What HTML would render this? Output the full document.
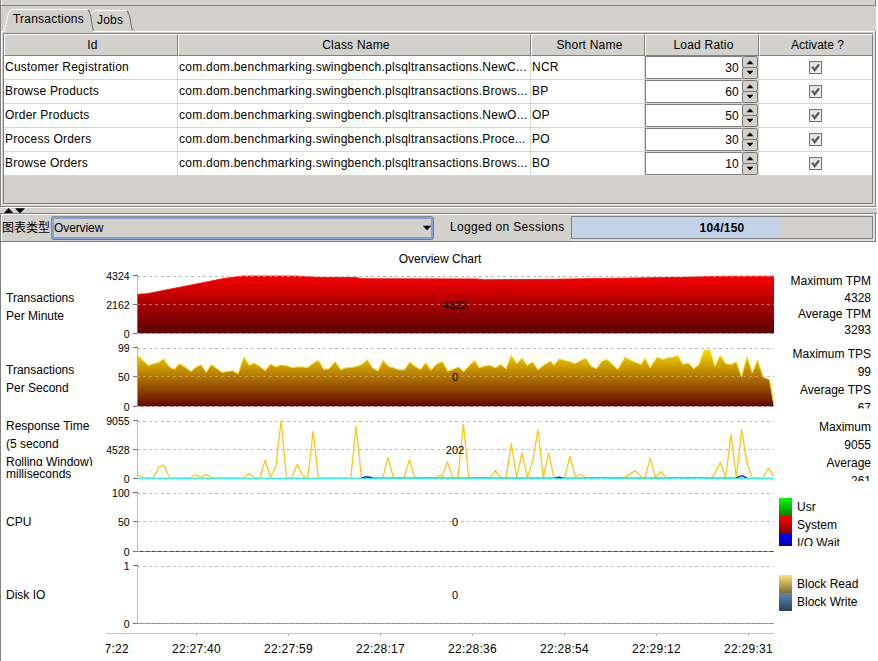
<!DOCTYPE html>
<html><head><meta charset="utf-8">
<style>
html,body{margin:0;padding:0;}
body{width:878px;height:661px;overflow:hidden;background:#d3d1cb;position:relative;font-family:"Liberation Sans","Noto Sans CJK SC",sans-serif;font-size:12px;color:#000;letter-spacing:0.22px;}
.abs{position:absolute;}
.t{position:absolute;white-space:nowrap;line-height:14px;}
.hd{position:absolute;top:34px;height:22px;background:#d3d1cb;border-left:1px solid #fff;border-top:1px solid #fff;border-right:1px solid #808080;border-bottom:1px solid #808080;box-sizing:border-box;text-align:center;line-height:20px;padding-left:3px;}
.row{position:absolute;left:4px;width:868px;height:23px;background:#fff;border-bottom:1px solid #d8d5cd;}
.cell{position:absolute;top:0;height:23px;line-height:22px;white-space:nowrap;overflow:hidden;}
.vl{position:absolute;top:56px;height:120px;width:1px;background:#d8d5cd;}
.spin{position:absolute;left:641px;top:0;width:98px;height:23px;border:1px solid #808080;box-sizing:border-box;background:#fff;}
.sb{position:absolute;left:738px;top:0;background:#d3d1cb;}
.cb{position:absolute;left:805px;top:5px;}
</style></head><body>
<!-- outer frame -->
<div class="abs" style="left:876px;top:0;width:2px;height:661px;background:#fff"></div>
<div class="abs" style="left:0;top:5px;width:876px;height:1px;background:#808080"></div>
<div class="abs" style="left:875px;top:0;width:1px;height:6px;background:#808080"></div>
<div class="abs" style="left:0;top:0;width:1px;height:661px;background:#808080"></div>
<div class="abs" style="left:1px;top:0;width:1px;height:5px;background:#fff"></div>
<!-- tabbed pane content border -->
<div class="abs" style="left:1px;top:31px;width:1px;height:175px;background:#fff"></div>
<div class="abs" style="left:1px;top:31px;width:3px;height:1px;background:#fff"></div>
<div class="abs" style="left:93px;top:31px;width:782px;height:1px;background:#fff"></div>
<div class="abs" style="left:875px;top:31px;width:1px;height:176px;background:#808080"></div>

<!-- tabs -->
<svg class="abs" style="left:0;top:8px" width="140" height="26">
<path d="M4.5 23 L5.5 17 L7.5 9 Q9 2.5 11.5 1.5 L87 1.5" fill="none" stroke="#fff" stroke-width="1"/>
<path d="M88 1.8 Q90 4 90.8 8 Q92 18 93.5 22.5" fill="none" stroke="#707070" stroke-width="1.1"/>
<path d="M91.3 6 Q92.5 3 94.5 2.5 L126.5 2.5" fill="none" stroke="#fff" stroke-width="1"/>
<path d="M127 2.8 Q129 5 129.8 9 Q131 18 132.5 22.5" fill="none" stroke="#707070" stroke-width="1.1"/>
</svg>
<div class="t" style="left:13px;top:12px;">Transactions</div>
<div class="t" style="left:97px;top:13px;">Jobs</div>

<!-- table -->
<div class="abs" style="left:3px;top:33px;width:872px;height:173px;background:#e2dfd9;"></div>
<div class="abs" style="left:3px;top:33px;width:870px;height:171px;border:1px solid #808080;box-sizing:border-box;background:#d3d1cb"></div>
<div class="hd" style="left:4px;width:174px;">Id</div>
<div class="hd" style="left:178px;width:353px;">Class Name</div>
<div class="hd" style="left:531px;width:114px;">Short Name</div>
<div class="hd" style="left:645px;width:114px;">Load Ratio</div>
<div class="hd" style="left:759px;width:114px;letter-spacing:0.05px">Activate ?</div>
<div class="row" style="top:56px"><div class="cell" style="left:1px">Customer Registration</div><div class="cell" style="left:175px;letter-spacing:0.25px">com.dom.benchmarking.swingbench.plsqltransactions.NewC...</div><div class="cell" style="left:528px">NCR</div><div class="spin"><div class="cell" style="right:3px;top:0">30</div></div><svg class="sb" width="16" height="23" viewBox="0 0 16 23"><rect x="0.5" y="0.5" width="15" height="11" rx="2" fill="#d3d1cb" stroke="#727272"/><rect x="0.5" y="11.5" width="15" height="11" rx="2" fill="#d3d1cb" stroke="#727272"/><path d="M4.5 8.3 L8 4.6 L11.5 8.3 Z M4.5 14.7 L11.5 14.7 L8 18.4 Z" fill="#000"/></svg><svg class="cb" width="13" height="13" viewBox="0 0 13 13"><defs><linearGradient id="cbg0" x1="0" y1="0" x2="1" y2="1"><stop offset="0" stop-color="#dededa"/><stop offset="1" stop-color="#f2f2f0"/></linearGradient></defs><rect x="0.5" y="0.5" width="12" height="12" fill="url(#cbg0)" stroke="#707070"/><path d="M3.3 5.8 L5.8 9 L10 3.4" fill="none" stroke="#5a5a5a" stroke-width="2.3"/></svg></div>
<div class="row" style="top:80px"><div class="cell" style="left:1px">Browse Products</div><div class="cell" style="left:175px;letter-spacing:0.25px">com.dom.benchmarking.swingbench.plsqltransactions.Brows...</div><div class="cell" style="left:528px">BP</div><div class="spin"><div class="cell" style="right:3px;top:0">60</div></div><svg class="sb" width="16" height="23" viewBox="0 0 16 23"><rect x="0.5" y="0.5" width="15" height="11" rx="2" fill="#d3d1cb" stroke="#727272"/><rect x="0.5" y="11.5" width="15" height="11" rx="2" fill="#d3d1cb" stroke="#727272"/><path d="M4.5 8.3 L8 4.6 L11.5 8.3 Z M4.5 14.7 L11.5 14.7 L8 18.4 Z" fill="#000"/></svg><svg class="cb" width="13" height="13" viewBox="0 0 13 13"><defs><linearGradient id="cbg1" x1="0" y1="0" x2="1" y2="1"><stop offset="0" stop-color="#dededa"/><stop offset="1" stop-color="#f2f2f0"/></linearGradient></defs><rect x="0.5" y="0.5" width="12" height="12" fill="url(#cbg1)" stroke="#707070"/><path d="M3.3 5.8 L5.8 9 L10 3.4" fill="none" stroke="#5a5a5a" stroke-width="2.3"/></svg></div>
<div class="row" style="top:104px"><div class="cell" style="left:1px">Order Products</div><div class="cell" style="left:175px;letter-spacing:0.25px">com.dom.benchmarking.swingbench.plsqltransactions.NewO...</div><div class="cell" style="left:528px">OP</div><div class="spin"><div class="cell" style="right:3px;top:0">50</div></div><svg class="sb" width="16" height="23" viewBox="0 0 16 23"><rect x="0.5" y="0.5" width="15" height="11" rx="2" fill="#d3d1cb" stroke="#727272"/><rect x="0.5" y="11.5" width="15" height="11" rx="2" fill="#d3d1cb" stroke="#727272"/><path d="M4.5 8.3 L8 4.6 L11.5 8.3 Z M4.5 14.7 L11.5 14.7 L8 18.4 Z" fill="#000"/></svg><svg class="cb" width="13" height="13" viewBox="0 0 13 13"><defs><linearGradient id="cbg2" x1="0" y1="0" x2="1" y2="1"><stop offset="0" stop-color="#dededa"/><stop offset="1" stop-color="#f2f2f0"/></linearGradient></defs><rect x="0.5" y="0.5" width="12" height="12" fill="url(#cbg2)" stroke="#707070"/><path d="M3.3 5.8 L5.8 9 L10 3.4" fill="none" stroke="#5a5a5a" stroke-width="2.3"/></svg></div>
<div class="row" style="top:128px"><div class="cell" style="left:1px">Process Orders</div><div class="cell" style="left:175px;letter-spacing:0.25px">com.dom.benchmarking.swingbench.plsqltransactions.Proce...</div><div class="cell" style="left:528px">PO</div><div class="spin"><div class="cell" style="right:3px;top:0">30</div></div><svg class="sb" width="16" height="23" viewBox="0 0 16 23"><rect x="0.5" y="0.5" width="15" height="11" rx="2" fill="#d3d1cb" stroke="#727272"/><rect x="0.5" y="11.5" width="15" height="11" rx="2" fill="#d3d1cb" stroke="#727272"/><path d="M4.5 8.3 L8 4.6 L11.5 8.3 Z M4.5 14.7 L11.5 14.7 L8 18.4 Z" fill="#000"/></svg><svg class="cb" width="13" height="13" viewBox="0 0 13 13"><defs><linearGradient id="cbg3" x1="0" y1="0" x2="1" y2="1"><stop offset="0" stop-color="#dededa"/><stop offset="1" stop-color="#f2f2f0"/></linearGradient></defs><rect x="0.5" y="0.5" width="12" height="12" fill="url(#cbg3)" stroke="#707070"/><path d="M3.3 5.8 L5.8 9 L10 3.4" fill="none" stroke="#5a5a5a" stroke-width="2.3"/></svg></div>
<div class="row" style="top:152px"><div class="cell" style="left:1px">Browse Orders</div><div class="cell" style="left:175px;letter-spacing:0.25px">com.dom.benchmarking.swingbench.plsqltransactions.Brows...</div><div class="cell" style="left:528px">BO</div><div class="spin"><div class="cell" style="right:3px;top:0">10</div></div><svg class="sb" width="16" height="23" viewBox="0 0 16 23"><rect x="0.5" y="0.5" width="15" height="11" rx="2" fill="#d3d1cb" stroke="#727272"/><rect x="0.5" y="11.5" width="15" height="11" rx="2" fill="#d3d1cb" stroke="#727272"/><path d="M4.5 8.3 L8 4.6 L11.5 8.3 Z M4.5 14.7 L11.5 14.7 L8 18.4 Z" fill="#000"/></svg><svg class="cb" width="13" height="13" viewBox="0 0 13 13"><defs><linearGradient id="cbg4" x1="0" y1="0" x2="1" y2="1"><stop offset="0" stop-color="#dededa"/><stop offset="1" stop-color="#f2f2f0"/></linearGradient></defs><rect x="0.5" y="0.5" width="12" height="12" fill="url(#cbg4)" stroke="#707070"/><path d="M3.3 5.8 L5.8 9 L10 3.4" fill="none" stroke="#5a5a5a" stroke-width="2.3"/></svg></div>
<div class="vl" style="left:177px"></div><div class="vl" style="left:530px"></div><div class="vl" style="left:644px"></div><div class="vl" style="left:758px"></div>

<!-- splitter -->
<div class="abs" style="left:0;top:206px;width:876px;height:1px;background:#808080"></div>
<div class="abs" style="left:0;top:207px;width:877px;height:7px;background:#d3d1cb"></div>
<div class="abs" style="left:0;top:207px;width:876px;height:1px;background:#fff"></div>
<svg class="abs" style="left:0;top:207px" width="30" height="7"><path d="M3.5 6.5 L8.5 1 L13.5 6.5 Z M15 1.2 L25 1.2 L20 6.5 Z" fill="#000"/></svg>
<div class="abs" style="left:0;top:213px;width:877px;height:1px;background:#808080"></div>
<!-- lower panel -->
<div class="abs" style="left:1px;top:214px;width:874px;height:1px;background:#fff"></div>
<div class="abs" style="left:1px;top:214px;width:1px;height:27px;background:#fff"></div>
<div class="abs" style="left:875px;top:214px;width:1px;height:28px;background:#808080"></div>
<div class="t" style="left:2px;top:221px;font-size:12px;letter-spacing:0;">图表类型</div>
<div class="abs" style="left:51px;top:216px;width:383px;height:24px;box-sizing:border-box;border:1px solid #8c8c8c;border-right-color:#7c7c7c;border-bottom-color:#7c7c7c;border-radius:3px;box-shadow:inset 0 0 0 2px #7fa0d8;"></div>
<div class="t" style="left:54px;top:221px;letter-spacing:-0.1px">Overview</div>
<svg class="abs" style="left:422px;top:225px" width="12" height="7"><path d="M0.8 0.8 L9.2 0.8 L5 5.2 Z" fill="#000"/></svg>
<div class="t" style="left:450px;top:220px;letter-spacing:0.32px">Logged on Sessions</div>
<div class="abs" style="left:571px;top:216px;width:304px;height:25px;background:#e2dfd9;"></div>
<div class="abs" style="left:571px;top:216px;width:302px;height:23px;box-sizing:border-box;border:1px solid #808080;background:#d3d1cb"><div style="width:208px;height:21px;background:#c2d3ea"></div></div>
<div class="t" style="left:571px;top:221px;width:302px;text-align:center;font-weight:bold;">104/150</div>
<!-- chart area -->
<div class="abs" style="left:0;top:241px;width:876px;height:1px;background:#808080"></div>
<div class="abs" style="left:1px;top:242px;width:877px;height:419px;background:#fff"></div>
<svg class="abs" style="left:0;top:241px" width="878" height="420" viewBox="0 0 878 420" font-family="Liberation Sans, sans-serif" letter-spacing="0">
<defs>
<linearGradient id="gr" gradientUnits="userSpaceOnUse" x1="0" y1="35" x2="0" y2="92"><stop offset="0" stop-color="#f80000"/><stop offset="1" stop-color="#5c0000"/></linearGradient>
<linearGradient id="gy" gradientUnits="userSpaceOnUse" x1="0" y1="107" x2="0" y2="165"><stop offset="0" stop-color="#ffe400"/><stop offset="1" stop-color="#640600"/></linearGradient>
<linearGradient id="lg1" x1="0" y1="0" x2="0" y2="1"><stop offset="0" stop-color="#00ff00"/><stop offset="1" stop-color="#008000"/></linearGradient>
<linearGradient id="lg2" x1="0" y1="0" x2="0" y2="1"><stop offset="0" stop-color="#ff0000"/><stop offset="1" stop-color="#800000"/></linearGradient>
<linearGradient id="lg3" x1="0" y1="0" x2="0" y2="1"><stop offset="0" stop-color="#0000ff"/><stop offset="1" stop-color="#000080"/></linearGradient>
<linearGradient id="lg4" x1="0" y1="0" x2="0" y2="1"><stop offset="0" stop-color="#ffe27a"/><stop offset="1" stop-color="#806e32"/></linearGradient>
<linearGradient id="lg5" x1="0" y1="0" x2="0" y2="1"><stop offset="0" stop-color="#5a86b8"/><stop offset="1" stop-color="#2c425c"/></linearGradient>
<clipPath id="c1"><rect x="770" y="0" width="108" height="305"/></clipPath>
<clipPath id="c2"><rect x="770" y="0" width="108" height="167.5"/></clipPath>
<clipPath id="c3"><rect x="770" y="0" width="108" height="240.0"/></clipPath>
<clipPath id="c4"><rect x="105.5" y="380" width="700" height="40"/></clipPath>
</defs>
<line x1="137" y1="35.5" x2="774" y2="35.5" stroke="#bcbcbc" stroke-dasharray="3,3"/>
<line x1="137" y1="63.5" x2="774" y2="63.5" stroke="#bcbcbc" stroke-dasharray="3,3"/>
<line x1="137" y1="92.5" x2="774" y2="92.5" stroke="#bcbcbc" stroke-dasharray="3,3"/>
<line x1="137" y1="107.5" x2="774" y2="107.5" stroke="#bcbcbc" stroke-dasharray="3,3"/>
<line x1="137" y1="135.5" x2="774" y2="135.5" stroke="#bcbcbc" stroke-dasharray="3,3"/>
<line x1="137" y1="165.5" x2="774" y2="165.5" stroke="#bcbcbc" stroke-dasharray="3,3"/>
<line x1="137" y1="180.5" x2="774" y2="180.5" stroke="#bcbcbc" stroke-dasharray="3,3"/>
<line x1="137" y1="208.5" x2="774" y2="208.5" stroke="#bcbcbc" stroke-dasharray="3,3"/>
<line x1="137" y1="237.5" x2="774" y2="237.5" stroke="#bcbcbc" stroke-dasharray="3,3"/>
<line x1="137" y1="252.5" x2="774" y2="252.5" stroke="#bcbcbc" stroke-dasharray="3,3"/>
<line x1="137" y1="280.5" x2="774" y2="280.5" stroke="#bcbcbc" stroke-dasharray="3,3"/>
<line x1="137" y1="310.5" x2="774" y2="310.5" stroke="#bcbcbc" stroke-dasharray="3,3"/>
<line x1="137" y1="325.5" x2="774" y2="325.5" stroke="#bcbcbc" stroke-dasharray="3,3"/>
<line x1="137" y1="382.5" x2="774" y2="382.5" stroke="#bcbcbc" stroke-dasharray="3,3"/>
<line x1="137.5" y1="34" x2="137.5" y2="93" stroke="#bababa"/>
<line x1="133" y1="34.5" x2="138" y2="34.5" stroke="#707070"/>
<text x="129.6" y="38.8" font-size="10.5" letter-spacing="0" text-anchor="end">4324</text>
<line x1="133" y1="63.5" x2="138" y2="63.5" stroke="#707070"/>
<text x="129.6" y="67.8" font-size="10.5" letter-spacing="0" text-anchor="end">2162</text>
<line x1="133" y1="92.5" x2="138" y2="92.5" stroke="#707070"/>
<text x="129.6" y="96.8" font-size="10.5" letter-spacing="0" text-anchor="end">0</text>
<line x1="137.5" y1="106" x2="137.5" y2="166" stroke="#bababa"/>
<line x1="133" y1="106.5" x2="138" y2="106.5" stroke="#707070"/>
<text x="129.6" y="110.8" font-size="10.5" letter-spacing="0" text-anchor="end">99</text>
<line x1="133" y1="135.5" x2="138" y2="135.5" stroke="#707070"/>
<text x="129.6" y="139.8" font-size="10.5" letter-spacing="0" text-anchor="end">50</text>
<line x1="133" y1="165.5" x2="138" y2="165.5" stroke="#707070"/>
<text x="129.6" y="169.8" font-size="10.5" letter-spacing="0" text-anchor="end">0</text>
<line x1="137.5" y1="179" x2="137.5" y2="238" stroke="#bababa"/>
<line x1="133" y1="179.5" x2="138" y2="179.5" stroke="#707070"/>
<text x="129.6" y="183.8" font-size="10.5" letter-spacing="0" text-anchor="end">9055</text>
<line x1="133" y1="208.5" x2="138" y2="208.5" stroke="#707070"/>
<text x="129.6" y="212.8" font-size="10.5" letter-spacing="0" text-anchor="end">4528</text>
<line x1="133" y1="237.5" x2="138" y2="237.5" stroke="#707070"/>
<text x="129.6" y="241.8" font-size="10.5" letter-spacing="0" text-anchor="end">0</text>
<line x1="137.5" y1="251" x2="137.5" y2="311" stroke="#bababa"/>
<line x1="133" y1="251.5" x2="138" y2="251.5" stroke="#707070"/>
<text x="129.6" y="255.8" font-size="10.5" letter-spacing="0" text-anchor="end">100</text>
<line x1="133" y1="280.5" x2="138" y2="280.5" stroke="#707070"/>
<text x="129.6" y="284.8" font-size="10.5" letter-spacing="0" text-anchor="end">50</text>
<line x1="133" y1="310.5" x2="138" y2="310.5" stroke="#707070"/>
<text x="129.6" y="314.8" font-size="10.5" letter-spacing="0" text-anchor="end">0</text>
<line x1="137.5" y1="324" x2="137.5" y2="383" stroke="#bababa"/>
<line x1="133" y1="324.5" x2="138" y2="324.5" stroke="#707070"/>
<text x="129.6" y="328.8" font-size="10.5" letter-spacing="0" text-anchor="end">1</text>
<line x1="133" y1="382.5" x2="138" y2="382.5" stroke="#707070"/>
<text x="129.6" y="386.8" font-size="10.5" letter-spacing="0" text-anchor="end">0</text>
<path d="M137.5,92.5 L137.5,53.3 L147.0,52.7 L224.0,37.5 L243.0,35.0 L295.0,35.0 L318.0,36.3 L356.0,36.5 L362.0,37.7 L476.0,37.9 L484.0,38.7 L551.0,38.3 L604.0,37.4 L683.0,36.3 L720.0,35.3 L774.0,35.2 L774.0,92.5 Z" fill="url(#gr)"/>
<path d="M137.7,165.5 L137.7,114.6 L143.0,119.5 L148.4,124.8 L153.3,122.8 L158.6,121.5 L163.5,117.9 L168.9,125.6 L174.2,128.5 L179.5,122.8 L184.8,126.0 L191.0,130.6 L196.3,126.0 L201.2,124.0 L206.1,131.4 L211.5,123.6 L216.8,127.7 L222.1,131.4 L227.5,130.6 L232.8,129.7 L238.1,133.0 L243.9,116.2 L249.2,124.4 L254.1,122.0 L259.8,125.6 L265.2,129.7 L270.5,123.2 L275.8,126.0 L281.1,124.0 L286.5,124.8 L291.8,126.5 L297.1,126.0 L302.5,126.0 L307.8,126.5 L313.1,122.4 L318.4,119.5 L323.8,128.5 L329.1,127.7 L335.2,120.7 L340.6,128.9 L345.9,126.9 L351.2,126.5 L356.6,125.6 L361.9,123.6 L367.2,118.7 L372.5,126.9 L377.9,130.1 L383.2,119.5 L388.5,125.6 L393.9,126.9 L399.2,128.9 L404.5,128.9 L409.8,121.1 L415.2,125.6 L420.5,128.5 L425.8,122.0 L431.1,129.3 L436.5,123.2 L442.5,120.7 L447.5,130.3 L453.0,128.5 L458.3,126.0 L463.7,130.7 L469.0,125.0 L474.6,119.7 L479.3,126.9 L484.7,125.2 L490.0,124.4 L495.3,126.9 L500.7,123.6 L506.0,127.7 L511.3,114.6 L516.6,122.8 L522.0,117.4 L527.3,124.4 L532.6,121.1 L538.0,128.9 L543.3,124.4 L550.7,120.3 L553.9,124.4 L559.3,117.9 L564.6,119.5 L569.9,120.7 L575.2,122.8 L580.6,119.5 L585.9,117.4 L591.2,125.6 L596.6,127.7 L601.9,120.3 L607.2,118.7 L612.5,123.6 L617.9,128.5 L625.2,116.2 L630.6,119.5 L635.9,121.5 L641.2,123.6 L644.9,117.4 L650.2,126.9 L657.2,116.2 L662.5,118.7 L667.9,117.0 L673.2,116.2 L677.7,114.6 L683.0,123.6 L688.4,122.0 L693.7,127.7 L699.0,123.6 L704.3,109.2 L709.7,109.2 L715.0,125.6 L720.3,114.6 L725.7,122.8 L731.0,123.6 L736.3,121.1 L741.6,135.9 L747.0,116.2 L752.3,131.8 L757.6,119.5 L763.0,135.9 L769.5,138.8 L774.0,165.0 L774.0,165.5 Z" fill="url(#gy)"/>
<polyline points="137.7,114.6 143.0,119.5 148.4,124.8 153.3,122.8 158.6,121.5 163.5,117.9 168.9,125.6 174.2,128.5 179.5,122.8 184.8,126.0 191.0,130.6 196.3,126.0 201.2,124.0 206.1,131.4 211.5,123.6 216.8,127.7 222.1,131.4 227.5,130.6 232.8,129.7 238.1,133.0 243.9,116.2 249.2,124.4 254.1,122.0 259.8,125.6 265.2,129.7 270.5,123.2 275.8,126.0 281.1,124.0 286.5,124.8 291.8,126.5 297.1,126.0 302.5,126.0 307.8,126.5 313.1,122.4 318.4,119.5 323.8,128.5 329.1,127.7 335.2,120.7 340.6,128.9 345.9,126.9 351.2,126.5 356.6,125.6 361.9,123.6 367.2,118.7 372.5,126.9 377.9,130.1 383.2,119.5 388.5,125.6 393.9,126.9 399.2,128.9 404.5,128.9 409.8,121.1 415.2,125.6 420.5,128.5 425.8,122.0 431.1,129.3 436.5,123.2 442.5,120.7 447.5,130.3 453.0,128.5 458.3,126.0 463.7,130.7 469.0,125.0 474.6,119.7 479.3,126.9 484.7,125.2 490.0,124.4 495.3,126.9 500.7,123.6 506.0,127.7 511.3,114.6 516.6,122.8 522.0,117.4 527.3,124.4 532.6,121.1 538.0,128.9 543.3,124.4 550.7,120.3 553.9,124.4 559.3,117.9 564.6,119.5 569.9,120.7 575.2,122.8 580.6,119.5 585.9,117.4 591.2,125.6 596.6,127.7 601.9,120.3 607.2,118.7 612.5,123.6 617.9,128.5 625.2,116.2 630.6,119.5 635.9,121.5 641.2,123.6 644.9,117.4 650.2,126.9 657.2,116.2 662.5,118.7 667.9,117.0 673.2,116.2 677.7,114.6 683.0,123.6 688.4,122.0 693.7,127.7 699.0,123.6 704.3,109.2 709.7,109.2 715.0,125.6 720.3,114.6 725.7,122.8 731.0,123.6 736.3,121.1 741.6,135.9 747.0,116.2 752.3,131.8 757.6,119.5 763.0,135.9 769.5,138.8 774.0,165.0" fill="none" stroke="#ffd800" stroke-width="1"/>
<polyline points="137.5,53.3 147.0,52.7 224.0,37.5 243.0,35.0 295.0,35.0 318.0,36.3 356.0,36.5 362.0,37.7 476.0,37.9 484.0,38.7 551.0,38.3 604.0,37.4 683.0,36.3 720.0,35.3 774.0,35.2" fill="none" stroke="#ff0000" stroke-width="1" stroke-opacity="0.8"/>
<polyline points="137.7,233.8 143.0,236.6 153.3,236.6 158.6,226.4 163.9,224.3 169.3,236.6 190.2,236.6 195.5,233.8 200.8,236.6 206.1,233.3 211.5,236.6 243.9,236.6 249.2,232.5 254.5,236.6 259.8,236.6 265.2,219.0 270.5,236.6 275.8,225.6 281.1,179.7 286.5,236.6 291.8,236.6 297.1,223.5 302.5,234.6 307.8,236.6 313.1,190.3 318.4,236.6 350.8,236.6 356.1,185.4 361.5,236.6 382.8,236.6 388.1,216.5 393.4,236.6 404.1,236.6 409.4,219.0 414.8,236.6 436.1,236.6 441.4,233.8 442.0,236.6 447.4,220.6 452.7,236.6 458.0,236.6 463.4,182.9 468.7,236.6 490.0,236.6 495.3,229.7 500.7,236.6 506.0,236.6 511.3,202.6 516.6,236.6 522.0,212.0 527.3,236.6 532.6,220.2 538.0,188.7 543.3,236.6 548.6,212.0 553.9,236.6 564.6,236.6 569.9,215.3 575.2,235.8 580.6,233.3 585.9,236.6 624.4,236.6 635.1,229.7 642.5,236.6 644.9,236.6 650.2,217.4 655.6,236.6 660.9,230.5 666.2,236.6 712.5,236.6 720.3,221.5 725.7,236.6 731.0,193.6 736.3,236.6 741.6,188.7 747.0,222.3 752.3,236.6 763.0,236.6 768.3,227.2 773.6,234.6" fill="none" stroke="#ffc414" stroke-width="1.25" stroke-linejoin="round"/>
<line x1="138" y1="236.5" x2="774" y2="236.5" stroke="#a0f0f8" stroke-opacity="0.7"/>
<polyline points="361.0,237.3 365.0,236.0 369.0,235.8 373.0,237.3 554.0,237.3 559.0,236.2 564.0,237.3 736.0,237.3 740.0,235.2 743.0,235.0 747.0,237.3" fill="none" stroke="#1414e6" stroke-width="1.3"/>
<line x1="138" y1="237.5" x2="774" y2="237.5" stroke="#00ffff"/>
<line x1="138" y1="310.5" x2="774" y2="310.5" stroke="#4a28c0"/>
<line x1="138" y1="382.5" x2="774" y2="382.5" stroke="#868c9c"/>
<line x1="137" y1="35.5" x2="774" y2="35.5" stroke="#bcbcbc" stroke-dasharray="3,3" stroke-opacity="0.6"/>
<line x1="137" y1="63.5" x2="774" y2="63.5" stroke="#bcbcbc" stroke-dasharray="3,3" stroke-opacity="0.6"/>
<line x1="137" y1="92.5" x2="774" y2="92.5" stroke="#bcbcbc" stroke-dasharray="3,3" stroke-opacity="0.6"/>
<line x1="137" y1="107.5" x2="774" y2="107.5" stroke="#bcbcbc" stroke-dasharray="3,3" stroke-opacity="0.6"/>
<line x1="137" y1="135.5" x2="774" y2="135.5" stroke="#bcbcbc" stroke-dasharray="3,3" stroke-opacity="0.6"/>
<line x1="137" y1="165.5" x2="774" y2="165.5" stroke="#bcbcbc" stroke-dasharray="3,3" stroke-opacity="0.6"/>
<line x1="137" y1="180.5" x2="774" y2="180.5" stroke="#bcbcbc" stroke-dasharray="3,3" stroke-opacity="0.6"/>
<line x1="137" y1="208.5" x2="774" y2="208.5" stroke="#bcbcbc" stroke-dasharray="3,3" stroke-opacity="0.6"/>
<line x1="137" y1="237.5" x2="774" y2="237.5" stroke="#bcbcbc" stroke-dasharray="3,3" stroke-opacity="0.6"/>
<line x1="137" y1="252.5" x2="774" y2="252.5" stroke="#bcbcbc" stroke-dasharray="3,3" stroke-opacity="0.6"/>
<line x1="137" y1="280.5" x2="774" y2="280.5" stroke="#bcbcbc" stroke-dasharray="3,3" stroke-opacity="0.6"/>
<line x1="137" y1="310.5" x2="774" y2="310.5" stroke="#bcbcbc" stroke-dasharray="3,3" stroke-opacity="0.6"/>
<line x1="137" y1="325.5" x2="774" y2="325.5" stroke="#bcbcbc" stroke-dasharray="3,3" stroke-opacity="0.6"/>
<line x1="137" y1="382.5" x2="774" y2="382.5" stroke="#bcbcbc" stroke-dasharray="3,3" stroke-opacity="0.6"/>
<line x1="137" y1="92.5" x2="774" y2="92.5" stroke="#d8c8c8" stroke-dasharray="3,3" stroke-opacity="0.7"/>
<line x1="137" y1="165.5" x2="774" y2="165.5" stroke="#d8c8c8" stroke-dasharray="3,3" stroke-opacity="0.7"/>
<line x1="106" y1="392.5" x2="774" y2="392.5" stroke="#c0c0c0"/>
<g clip-path="url(#c4)" letter-spacing="0.28">
<text x="104.5" y="412" font-size="12" text-anchor="middle">22:27:22</text>
<line x1="196.5" y1="392" x2="196.5" y2="395" stroke="#b8b8b8"/>
<text x="196.5" y="412" font-size="12" text-anchor="middle">22:27:40</text>
<line x1="288.5" y1="392" x2="288.5" y2="395" stroke="#b8b8b8"/>
<text x="288.5" y="412" font-size="12" text-anchor="middle">22:27:59</text>
<line x1="380.5" y1="392" x2="380.5" y2="395" stroke="#b8b8b8"/>
<text x="380.5" y="412" font-size="12" text-anchor="middle">22:28:17</text>
<line x1="472.5" y1="392" x2="472.5" y2="395" stroke="#b8b8b8"/>
<text x="472.5" y="412" font-size="12" text-anchor="middle">22:28:36</text>
<line x1="564.5" y1="392" x2="564.5" y2="395" stroke="#b8b8b8"/>
<text x="564.5" y="412" font-size="12" text-anchor="middle">22:28:54</text>
<line x1="656.5" y1="392" x2="656.5" y2="395" stroke="#b8b8b8"/>
<text x="656.5" y="412" font-size="12" text-anchor="middle">22:29:12</text>
<line x1="748.5" y1="392" x2="748.5" y2="395" stroke="#b8b8b8"/>
<text x="748.5" y="412" font-size="12" text-anchor="middle">22:29:31</text>
</g>
<text x="440" y="22" font-size="12" text-anchor="middle">Overview Chart</text>
<text x="6" y="61" font-size="12">Transactions</text>
<text x="6" y="79" font-size="12">Per Minute</text>
<text x="6" y="133" font-size="12">Transactions</text>
<text x="6" y="151" font-size="12">Per Second</text>
<text x="6" y="189" font-size="12">Response Time</text>
<text x="6" y="207" font-size="12">(5 second</text>
<text x="6" y="285" font-size="12">CPU</text>
<text x="6" y="358" font-size="12">Disk IO</text>
<text x="6" y="237" font-size="12">milliseconds</text>
<clipPath id="c5"><rect x="0" y="209" width="130" height="16"/></clipPath>
<text x="6" y="225" font-size="12" clip-path="url(#c5)">Rolling Window)</text>
<text x="455" y="68" font-size="11" text-anchor="middle">4322</text>
<text x="455" y="140" font-size="11" text-anchor="middle">0</text>
<text x="455" y="213" font-size="11" text-anchor="middle">202</text>
<text x="455" y="285" font-size="11" text-anchor="middle">0</text>
<text x="455" y="358" font-size="11" text-anchor="middle">0</text>
<g text-anchor="end" font-size="12">
<text x="871" y="44">Maximum TPM</text>
<text x="871" y="61">4328</text>
<text x="871" y="77">Average TPM</text>
<text x="871" y="93">3293</text>
<text x="871" y="117">Maximum TPS</text>
<text x="871" y="135">99</text>
<text x="871" y="153">Average TPS</text>
<text x="871" y="171" clip-path="url(#c2)">67</text>
<text x="871" y="190">Maximum</text>
<text x="871" y="208">9055</text>
<text x="871" y="226">Average</text>
<text x="871" y="244" clip-path="url(#c3)">261</text>
</g>
<rect x="779" y="257" width="13" height="18" fill="url(#lg1)"/>
<rect x="779" y="275" width="13" height="18" fill="url(#lg2)"/>
<rect x="779" y="293" width="13" height="18" fill="url(#lg3)" clip-path="url(#c1)"/>
<text x="797" y="269.6" font-size="12">Usr</text>
<text x="797" y="288" font-size="12">System</text>
<text x="797" y="306" font-size="12" clip-path="url(#c1)">I/O Wait</text>
<rect x="779" y="334" width="13" height="18" fill="url(#lg4)"/>
<rect x="779" y="352" width="13" height="18" fill="url(#lg5)"/>
<text x="797" y="347" font-size="12">Block Read</text>
<text x="797" y="365" font-size="12">Block Write</text>
</svg>
</body></html>
